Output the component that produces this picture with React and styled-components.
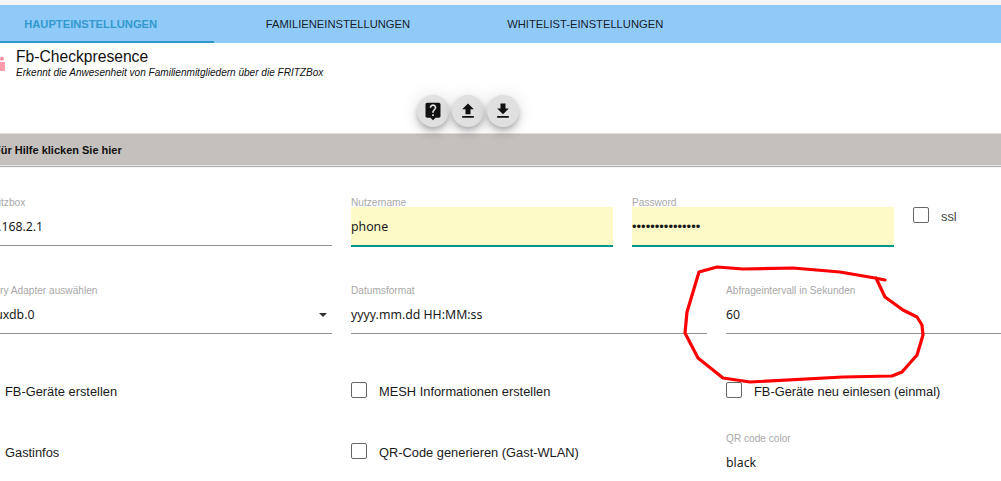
import React from 'react';
import styled, { createGlobalStyle } from 'styled-components';

const Global = createGlobalStyle`
  html, body { margin: 0; padding: 0; background: #fff; overflow: hidden; }
  * { box-sizing: border-box; }
`;
const Page = styled.div`
  position: relative; width: 1001px; height: 481px; overflow: hidden; padding-top: 5px;
  background: #fff; font-family: "Liberation Sans", Arial, sans-serif; color: #000;
`;
const TopStrip = styled.div`
  position: absolute; top: 0; left: 0; right: 0; height: 5px; background: #f5f5f5;
`;
const TabBar = styled.div`
  display: flex; height: 38px; margin-left: -33px; width: 1034px; background: #90caf9;
`;
const Tab = styled.div`
  width: 247.3px; height: 38px; padding-top: 1px; display: flex; align-items: center; justify-content: center;
  font-size: 11.2px; text-transform: uppercase;
  font-weight: ${p => (p.$active ? 700 : 400)};
  color: ${p => (p.$active ? '#3399cc' : 'rgba(0,0,0,0.87)')};
  border-bottom: 2px solid ${p => (p.$active ? '#3399cc' : 'transparent')};
`;
const Header = styled.div`
  display: flex; height: 49px; padding-top: 5px; margin-left: -6px; gap: 11px;
`;
const Logo = styled.svg`
  width: 11px; height: 16px; margin-top: 8px; flex: none;
`;
const HeaderText = styled.div`
  display: flex; flex-direction: column;
`;
const Title = styled.div`
  font-size: 15.65px; line-height: 18px; color: #111;
`;
const Subtitle = styled.div`
  font-size: 10.05px; font-style: italic; line-height: 12px; margin-top: 1px; color: #111;
`;
const FabRow = styled.div`
  display: flex; gap: 3px; height: 40px; padding: 3px 0 0 417px;
`;
const Fab = styled.div`
  width: 32px; height: 32px; border-radius: 50%; background: #e0e0e0; display: flex; align-items: center; justify-content: center;
  box-shadow: 0 3px 5px -1px rgba(0,0,0,.2), 0 6px 10px 0 rgba(0,0,0,.14), 0 1px 18px 0 rgba(0,0,0,.12);
`;
const HelpBar = styled.div`
  height: 33px; margin: 1px 0 0 -6px; display: flex; align-items: center; background: #c4c0be;
  font-size: 11px; font-weight: 700; color: #111;
  border-top: 1px solid #e2e0df; border-bottom: 1px solid #e6e5e4;
  box-shadow: 0 1px 1px rgba(0,0,0,.3);
`;
const Form = styled.div`
  display: flex; flex-direction: column; margin-left: -23px; padding-top: 31px;
`;
const Row = styled.div`
  display: grid; grid-template-columns: ${p => p.$columns};
  column-gap: 19px; height: ${p => p.$height}px; margin-bottom: ${p => p.$gap}px;
`;
const Field = styled.div`
  display: flex; flex-direction: column; position: relative; min-width: 0;
`;
const FieldLabel = styled.div`
  height: 10px; font-size: 10.15px; line-height: 11px; color: #a8a8a8; white-space: nowrap;
`;
const FieldValue = styled.div`
  display: flex; align-items: center; justify-content: space-between;
  padding-top: 1px; font-family: "Noto Sans", sans-serif; font-size: 12.3px; color: #1a1a1a; white-space: nowrap;
  border-bottom: ${p => (p.$filled ? '2px solid #009688' : '1px solid #949494')};
  background: ${p => (p.$filled ? '#fdfac8' : 'transparent')};
  height: ${p => (p.$filled ? 40 : 39)}px;
`;
const Dots = styled.span`
  font-family: "Liberation Sans", sans-serif; font-size: 13px;
`;
const Caret = styled.span`
  width: 0; height: 0; margin-right: 5px; border-left: 4px solid transparent; border-right: 4px solid transparent;
  border-top: 4px solid #333;
`;
const CheckRow = styled.div`
  display: flex; align-items: flex-start; gap: 12px; padding-top: ${p => p.$top || 0}px;
`;
const Box = styled.span`
  width: 16px; height: 16px; flex: none; border: 1.5px solid #666; border-radius: 2px;
`;
const CheckLabel = styled.span`
  font-size: 12.85px; line-height: 18px; margin-top: 1px; color: ${p => (p.$muted ? '#444' : '#1a1a1a')}; white-space: nowrap;
`;
const Marker = styled.svg`
  position: absolute; inset: 0; width: 1001px; height: 481px; pointer-events: none;
`;

const Icon = ({ d }) => (
  <svg width="20" height="20" viewBox="0 0 24 24" fill="#111"><path d={d} /></svg>
);

const Check = ({ label, top, muted }) => (
  <CheckRow $top={top}>
    <Box />
    <CheckLabel $muted={muted}>{label}</CheckLabel>
  </CheckRow>
);

const TextField = ({ label, value, filled, caret }) => (
  <Field>
    <FieldLabel>{label}</FieldLabel>
    <FieldValue $filled={filled}>
      {value}
      {caret && <Caret />}
    </FieldValue>
  </Field>
);

const WIDE = '355px 356px 355px';

export default function App() {
  return (
    <Page>
      <Global />
      <TopStrip />
      <TabBar>
        <Tab $active>Haupteinstellungen</Tab>
        <Tab>Familieneinstellungen</Tab>
        <Tab>Whitelist-Einstellungen</Tab>
      </TabBar>
      <Header>
        <Logo viewBox="0 0 11 16">
          <circle cx="8" cy="2.8" r="2" fill="#ff8fa3" />
          <rect x="6" y="6" width="5" height="9" fill="#ff9cad" />
        </Logo>
        <HeaderText>
          <Title>Fb-Checkpresence</Title>
          <Subtitle>Erkennt die Anwesenheit von Familienmitgliedern über die FRITZBox</Subtitle>
        </HeaderText>
      </Header>
      <FabRow>
        <Fab><Icon d="M19 2H5c-1.11 0-2 .9-2 2v14c0 1.1.89 2 2 2h4l3 3 3-3h4c1.1 0 2-.9 2-2V4c0-1.1-.9-2-2-2zm-6 16h-2v-2h2v2zm2.07-7.75l-.9.92C13.45 11.9 13 12.5 13 14h-2v-.5c0-1.1.45-2.1 1.17-2.83l1.24-1.26c.37-.36.59-.86.59-1.41 0-1.1-.9-2-2-2s-2 .9-2 2H8c0-2.21 1.79-4 4-4s4 1.79 4 4c0 .88-.36 1.68-.93 2.25z" /></Fab>
        <Fab><Icon d="M9 16h6v-6h4l-7-7-7 7h4zm-4 2h14v2H5z" /></Fab>
        <Fab><Icon d="M19 9h-4V3H9v6H5l7 7 7-7zM5 18v2h14v-2H5z" /></Fab>
      </FabRow>
      <HelpBar>Für Hilfe klicken Sie hier</HelpBar>
      <Form>
        <Row $columns="355px 262px 262px auto" $height={49} $gap={39}>
          <TextField label="IP Fritzbox" value="192.168.2.1" />
          <TextField label="Nutzername" value="phone" filled />
          <TextField label="Password" value={<Dots>•••••••••••••••</Dots>} filled />
          <Check label="ssl" top={10} muted />
        </Row>
        <Row $columns={WIDE} $height={49} $gap={48}>
          <TextField label="History Adapter auswählen" value="influxdb.0" caret />
          <TextField label="Datumsformat" value="yyyy.mm.dd HH:MM:ss" />
          <TextField label="Abfrageintervall in Sekunden" value="60" />
        </Row>
        <Row $columns={WIDE} $height={26} $gap={25}>
          <Check label="FB-Geräte erstellen" />
          <Check label="MESH Informationen erstellen" />
          <Check label="FB-Geräte neu einlesen (einmal)" />
        </Row>
        <Row $columns={WIDE} $height={49} $gap={0}>
          <Check label="Gastinfos" top={10} />
          <Check label="QR-Code generieren (Gast-WLAN)" top={10} />
          <TextField label="QR code color" value="black" />
        </Row>
      </Form>
      <Marker viewBox="0 0 1001 481">
        <polyline
          fill="none" stroke="#f00" strokeWidth="3.2" strokeLinejoin="round" strokeLinecap="round"
          points="885,280 875,278 840,272 793,268 743,269 717,267 699,272 687,312 685,333 698,358 723,378 750,382 843,377 892,376 902,372 917,355 923,335 922,325 917,317 903,310 885,297 876,278"
        />
      </Marker>
    </Page>
  );
}
